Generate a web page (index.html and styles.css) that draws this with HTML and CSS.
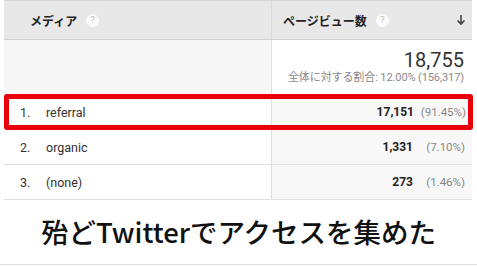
FILE: index.html
```html
<!DOCTYPE html>
<html lang="ja">
<head>
<meta charset="utf-8">
<link rel="stylesheet" href="styles.css">
</head>
<body>
<div class="table">
  <div class="row head">
    <div class="cell left"><span class="htxt">メディア</span><span class="q">?</span></div>
    <div class="cell right"><span class="htxt">ページビュー数</span><span class="q">?</span><span class="arrow"><svg width="10" height="12" viewBox="0 0 10 12"><path d="M5 1v9M1.5 6.5L5 10l3.5-3.5" fill="none" stroke="#444" stroke-width="1.6"/></svg></span></div>
  </div>
  <div class="row total">
    <div class="cell left"></div>
    <div class="cell right">
      <div class="big">18,755</div>
      <div class="sub">全体に対する割合: 12.00% (156,317)</div>
    </div>
  </div>
  <div class="row data hl">
    <div class="cell left"><span class="num">1.</span><span class="name">referral</span></div>
    <div class="cell right"><span class="val">17,151</span><span class="pct">(91.45%)</span></div>
  </div>
  <div class="row data">
    <div class="cell left"><span class="num">2.</span><span class="name">organic</span></div>
    <div class="cell right"><span class="val">1,331</span><span class="pct">(7.10%)</span></div>
  </div>
  <div class="row data">
    <div class="cell left"><span class="num">3.</span><span class="name">(none)</span></div>
    <div class="cell right"><span class="val">273</span><span class="pct">(1.46%)</span></div>
  </div>
</div>
<div class="caption">殆どTwitterでアクセスを集めた</div>
</body>
</html>
```

FILE: styles.css
```css
* { box-sizing: border-box; }
html, body { margin: 0; padding: 0; background: #fff; }
body {
  width: 477px;
  height: 266px;
  overflow: hidden;
  font-family: Roboto, "Noto Sans CJK JP", sans-serif;
  color: #333;
}
.table {
  margin-left: 4px;
  width: 468px;
}
.row {
  display: flex;
}
.cell.left { width: 267px; }
.cell.right { width: 201px; }
.head {
  height: 40px;
  background: #e8e8e8;
  border-top: 1px solid #d6d6d6;
  border-bottom: 1px solid #cfcfcf;
}
.head .cell {
  display: flex;
  align-items: center;
  font-size: 12px;
  font-weight: bold;
  color: #222;
  font-family: "Noto Sans CJK JP", sans-serif;
}
.head .left { padding-left: 26px; }
.head .right { padding-left: 11px; border-left: 1px solid #d9d9d9; padding-right: 6px; }
.q {
  display: inline-flex;
  align-items: center;
  justify-content: center;
  width: 13px;
  height: 13px;
  border-radius: 50%;
  background: #fafafa;
  color: #bbb;
  font-size: 9px;
  font-weight: normal;
  margin-left: 9px;
  font-family: Roboto, sans-serif;
}
.arrow { margin-left: auto; display: flex; }
.total { height: 54px; }
.total .left { background: #f7f7f7; }
.total .right {
  border-left: 1px solid #e0e0e0;
  text-align: right;
  padding-right: 8px;
  padding-top: 9px;
}
.big { font-size: 20px; color: #333; line-height: 22px; }
.sub { font-size: 11px; color: #8a8a8a; line-height: 14px; letter-spacing: -0.1px; }
.data {
  height: 35px;
  border-bottom: 1px solid #e0e0e0;
}
.data .cell { display: flex; align-items: center; font-size: 12.5px; }
.data .left { background: #fff; padding-left: 16px; }
.data .right {
  background: #f8f8f8;
  border-left: 1px solid #e0e0e0;
  justify-content: flex-end;
  padding-right: 7px;
}
.hl {
  width: 469px;
  height: 36px;
  border: 5px solid #e8000b;
  border-radius: 3px;
}
.hl .left { width: 262px; padding-left: 11px; }
.hl .right { width: 197px; padding-right: 2px; }
.num { width: 26px; color: #333; }
.name { color: #333; }
.val { font-weight: bold; color: #222; font-size: 12px; }
.pct { width: 52px; text-align: right; color: #888; font-size: 11.5px; }
.caption {
  height: 65px;
  border-bottom: 1px solid #ddd;
  display: flex;
  align-items: center;
  justify-content: center;
  font-family: "Noto Sans CJK JP", sans-serif;
  font-weight: 500;
  font-size: 27.5px;
  color: #111;
  padding-bottom: 3px;
}
```
